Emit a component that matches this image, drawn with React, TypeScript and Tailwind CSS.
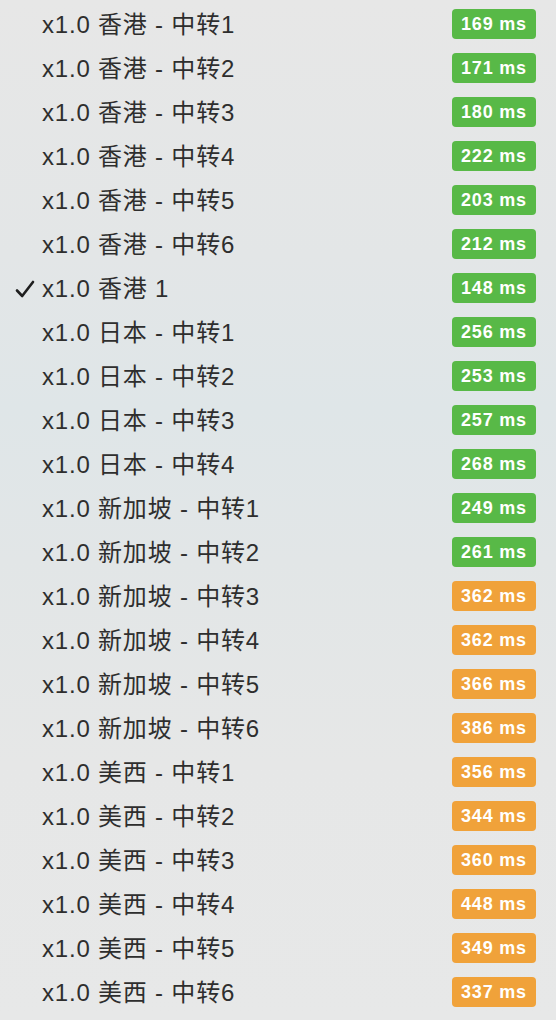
import React from "react";

type Row = { name: string; ms: number; checked?: boolean };

const rows: Row[] = [
  { name: "x1.0 香港 - 中转1", ms: 169 },
  { name: "x1.0 香港 - 中转2", ms: 171 },
  { name: "x1.0 香港 - 中转3", ms: 180 },
  { name: "x1.0 香港 - 中转4", ms: 222 },
  { name: "x1.0 香港 - 中转5", ms: 203 },
  { name: "x1.0 香港 - 中转6", ms: 212 },
  { name: "x1.0 香港 1", ms: 148, checked: true },
  { name: "x1.0 日本 - 中转1", ms: 256 },
  { name: "x1.0 日本 - 中转2", ms: 253 },
  { name: "x1.0 日本 - 中转3", ms: 257 },
  { name: "x1.0 日本 - 中转4", ms: 268 },
  { name: "x1.0 新加坡 - 中转1", ms: 249 },
  { name: "x1.0 新加坡 - 中转2", ms: 261 },
  { name: "x1.0 新加坡 - 中转3", ms: 362 },
  { name: "x1.0 新加坡 - 中转4", ms: 362 },
  { name: "x1.0 新加坡 - 中转5", ms: 366 },
  { name: "x1.0 新加坡 - 中转6", ms: 386 },
  { name: "x1.0 美西 - 中转1", ms: 356 },
  { name: "x1.0 美西 - 中转2", ms: 344 },
  { name: "x1.0 美西 - 中转3", ms: 360 },
  { name: "x1.0 美西 - 中转4", ms: 448 },
  { name: "x1.0 美西 - 中转5", ms: 349 },
  { name: "x1.0 美西 - 中转6", ms: 337 },
];

export default function App() {
  return (
    <div
      className="w-[556px] h-[1020px] overflow-hidden pt-[2px] bg-[linear-gradient(180deg,#e7e7e7_0%,#e3e6e7_25%,#dfe6e8_40%,#e2e6e7_55%,#e6e7e7_75%,#e7e8e8_100%)]"
      style={{ fontFamily: '"Liberation Sans", "Noto Sans CJK SC", sans-serif' }}
    >
      {rows.map((r, i) => (
        <div key={i} className="h-[44px] flex items-center">
          <div className="w-[42px] flex justify-end pr-[7px]">
            {r.checked && (
              <svg width="20" height="18" viewBox="0 0 20 18" className="mt-[2px]">
                <path
                  d="M2 10.5 L7.2 16 L18 2"
                  fill="none"
                  stroke="#1f1f1f"
                  strokeWidth="2.6"
                  strokeLinecap="round"
                  strokeLinejoin="round"
                />
              </svg>
            )}
          </div>
          <div className="flex-1 mt-[2px] text-[24px] tracking-[0.8px] text-[#2e2e2e] leading-none whitespace-pre">
            {r.name}
          </div>
          <div
            className={`mr-[20px] w-[84px] h-[30px] rounded-[4px] flex items-center justify-center text-white font-bold text-[18px] tracking-[0.8px] ${
              r.ms < 300 ? "bg-[#58b947]" : "bg-[#f0a23a]"
            }`}
          >
            {r.ms} ms
          </div>
        </div>
      ))}
    </div>
  );
}
